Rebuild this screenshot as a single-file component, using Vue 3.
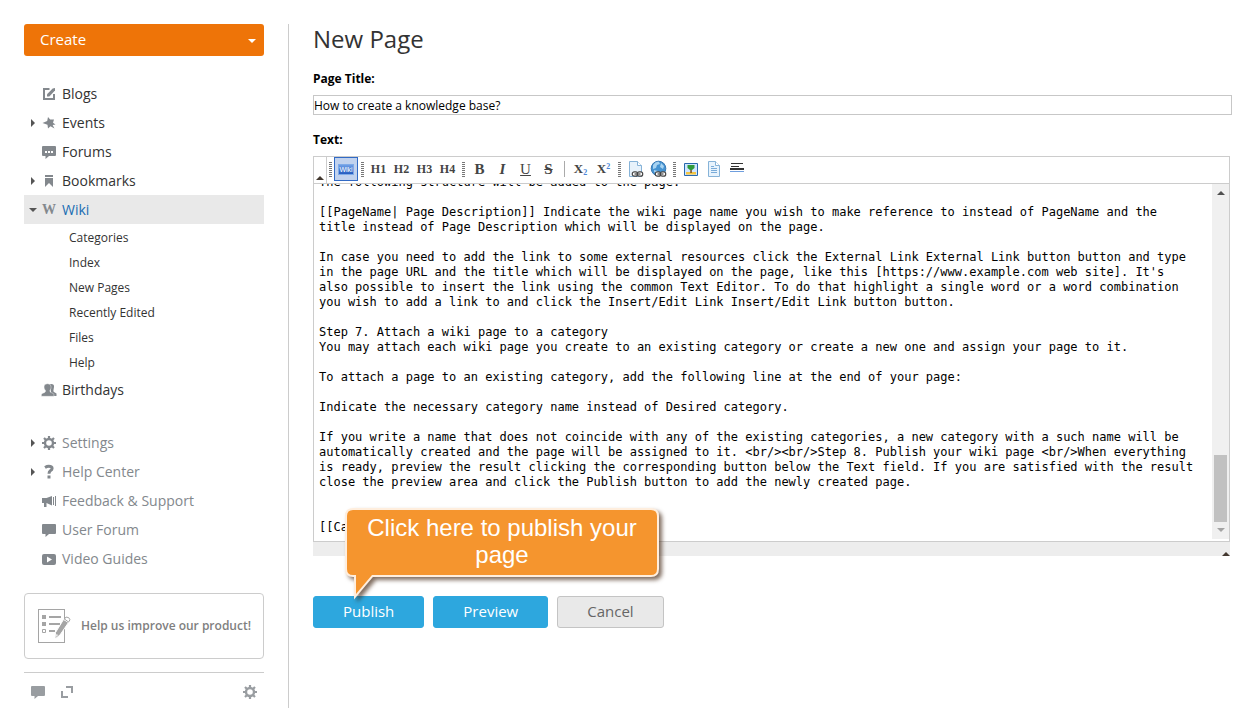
<script setup>
import { ref, onMounted } from 'vue'

const mainNav = [
  { label: 'Blogs', icon: 'edit' },
  { label: 'Events', icon: 'pin', arrow: 'right' },
  { label: 'Forums', icon: 'chat-dots' },
  { label: 'Bookmarks', icon: 'bookmark', arrow: 'right' },
  {
    label: 'Wiki',
    icon: 'wiki',
    arrow: 'down',
    active: true,
    children: ['Categories', 'Index', 'New Pages', 'Recently Edited', 'Files', 'Help'],
  },
  { label: 'Birthdays', icon: 'people' },
]

const supportNav = [
  { label: 'Settings', icon: 'gear', arrow: 'right' },
  { label: 'Help Center', icon: 'question', arrow: 'right' },
  { label: 'Feedback & Support', icon: 'horn' },
  { label: 'User Forum', icon: 'chat' },
  { label: 'Video Guides', icon: 'video' },
]

const navGroups = [
  { name: 'Modules', items: mainNav },
  { name: 'Support', items: supportNav, muted: true },
]

const headings = ['H1', 'H2', 'H3', 'H4']
const pageTitle = ref('How to create a knowledge base?')
const area = ref(null)

const text = ref(`The following structure will be added to the page:

[[PageName| Page Description]] Indicate the wiki page name you wish to make reference to instead of PageName and the
title instead of Page Description which will be displayed on the page.

In case you need to add the link to some external resources click the External Link External Link button button and type
in the page URL and the title which will be displayed on the page, like this [https://www.example.com web site]. It's
also possible to insert the link using the common Text Editor. To do that highlight a single word or a word combination
you wish to add a link to and click the Insert/Edit Link Insert/Edit Link button button.

Step 7. Attach a wiki page to a category
You may attach each wiki page you create to an existing category or create a new one and assign your page to it.

To attach a page to an existing category, add the following line at the end of your page:

Indicate the necessary category name instead of Desired category.

If you write a name that does not coincide with any of the existing categories, a new category with a such name will be
automatically created and the page will be assigned to it. <br/><br/>Step 8. Publish your wiki page <br/>When everything
is ready, preview the result clicking the corresponding button below the Text field. If you are satisfied with the result
close the preview area and click the Publish button to add the newly created page.


[[Ca`)

onMounted(() => {
  area.value.scrollTop = area.value.scrollHeight
})
</script>

<template>
  <div class="page">
    <svg class="defs" aria-hidden="true">
      <symbol id="i-edit" viewBox="0 0 16 16">
        <path d="M8.500 3H3v10h10V8" fill="none" stroke="currentColor" stroke-width="2" />
        <path d="M6 10.500V8.300L11.700 2.500 14 2v2.500L8.300 10.500z" fill="currentColor" />
      </symbol>
      <symbol id="i-pin" viewBox="0 0 16 16">
        <path d="M7 2l2.200 2.600L13 4.500l-1 3.300 2.500 1.700-2.900.6 1.900 3.400-4-2.300L7 13.500l-.5-3.700L1.500 8l4.700-2z" fill="currentColor" />
      </symbol>
      <symbol id="i-chat" viewBox="0 0 16 16">
        <path d="M2 2h12q1 0 1 1v8q0 1-1 1H8L4.500 15v-3H2q-1 0-1-1V3q0-1 1-1z" fill="currentColor" />
      </symbol>
      <symbol id="i-chat-dots" viewBox="0 0 16 16">
        <path d="M2 2h12q1 0 1 1v8q0 1-1 1H8L4.500 15v-3H2q-1 0-1-1V3q0-1 1-1z" fill="currentColor" />
        <path d="M4 7h2v2H4zM7 7h2v2H7zM10 7h2v2h-2z" fill="#fff" />
      </symbol>
      <symbol id="i-bookmark" viewBox="0 0 16 16">
        <path d="M4 2h8v2H4zM4 5h8v9l-4-4-4 4z" fill="currentColor" />
      </symbol>
      <symbol id="i-people" viewBox="0 0 16 16">
        <path d="M9 2q4.500-.6 4 3l-.5 3q-.5 1.500.5 2l2.500 1.500V14h-4l-1.500-3z" fill="currentColor" />
        <path d="M6.500 1.700q3.800 0 3.600 3.300 0 2-1.200 3.500-.2 1.500.8 1.800l2.600 1.200q.7.400.7 2.800H.3q0-2.500.9-2.800l2.500-1q1-.5.800-1.900Q3 7 3 5q0-3.300 3.500-3.300z" fill="currentColor" stroke="#fff" stroke-width=".4" />
      </symbol>
      <symbol id="i-gear" viewBox="0 0 16 16">
        <circle cx="8" cy="8" r="4" fill="none" stroke="currentColor" stroke-width="2.400" />
        <path d="M8 1v3M8 12v3M1 8h3M12 8h3M3 3l2 2M11 11l2 2M13 3l-2 2M5 11l-2 2" stroke="currentColor" stroke-width="2.200" />
      </symbol>
      <symbol id="i-question" viewBox="0 0 16 16">
        <path d="M4 3.500Q6 2.300 7.800 2.300q3.300 0 3.300 2.200 0 1.300-1.700 2.200Q8 7.600 8 9.800" fill="none" stroke="currentColor" stroke-width="3" />
        <path d="M6.500 11.500h3v3h-3z" fill="currentColor" />
      </symbol>
      <symbol id="i-horn" viewBox="0 0 16 16">
        <path d="M1 5h4.500L11 3v9.500L5.500 10v4H3v-4H1z" fill="currentColor" />
        <path d="M12.500 4v8M14.500 3v10" stroke="currentColor" />
      </symbol>
      <symbol id="i-video" viewBox="0 0 16 16">
        <rect x="1" y="3" width="14" height="11" rx="2" fill="currentColor" />
        <path d="M6 5.500l5 3-5 3z" fill="#fff" />
      </symbol>
      <symbol id="i-expand" viewBox="0 0 16 16">
        <path d="M7 3h6v6M3 7v6h6" fill="none" stroke="currentColor" stroke-width="2" />
      </symbol>
      <symbol id="i-chain" viewBox="0 0 12 6">
        <rect x=".8" y=".8" width="5.400" height="4.400" rx="2" fill="#fff" stroke="#444" stroke-width="1.200" />
        <rect x="5.800" y=".8" width="5.400" height="4.400" rx="2" fill="#fff" stroke="#444" stroke-width="1.200" />
        <path d="M3 3h6" stroke="#444" stroke-width="1.200" />
      </symbol>
    </svg>

    <aside class="sidebar">
      <button class="create" type="button">Create <i class="caret"></i></button>

      <nav v-for="g in navGroups" :key="g.name" class="nav" :class="{ muted: g.muted }" :aria-label="g.name">
        <template v-for="n in g.items" :key="n.label">
          <a href="#" class="row" :class="{ active: n.active }">
            <i class="arrow" :class="n.arrow"></i>
            <span v-if="n.icon === 'wiki'" class="mark w" aria-hidden="true">W</span>
            <svg v-else class="icon mark"><use :href="'#i-' + n.icon" /></svg>
            <span>{{ n.label }}</span>
          </a>
          <div v-if="n.children" class="sub">
            <a v-for="c in n.children" :key="c" href="#">{{ c }}</a>
          </div>
        </template>
      </nav>

      <a href="#" class="improve">
        <svg width="34" height="36" viewBox="0 0 34 36" aria-hidden="true">
          <rect x=".5" y="1.500" width="26" height="33" fill="#fff" stroke="#a5a5a5" />
          <path d="M4 7h4v4H4zM4 14h4v4H4z" fill="#a5a5a5" />
          <path d="M4.500 21.500h3v3h-3z" fill="#fff" stroke="#a5a5a5" />
          <path d="M11 9h12M11 16h11M11 23h6" stroke="#a5a5a5" stroke-width="2" />
          <path d="M25.500 11.500l5 3-8.500 12.500-5 4 .5-6.500z" fill="#a5a5a5" stroke="#fff" />
          <path d="M26.500 11l1.500-2q3.500 0 4 2.800l-1.500 2.200z" fill="#fff" stroke="#a5a5a5" />
          <path d="M18.500 26l1.500 1-2 2z" fill="#fff" />
        </svg>
        <span>Help us improve our product!</span>
      </a>

      <div class="tools">
        <button type="button" aria-label="Chat"><svg class="icon"><use href="#i-chat" /></svg></button>
        <button type="button" aria-label="Expand"><svg class="icon"><use href="#i-expand" /></svg></button>
        <button type="button" aria-label="Preferences" class="last"><svg class="icon"><use href="#i-gear" /></svg></button>
      </div>
    </aside>

    <main class="main">
      <h1>New Page</h1>

      <label class="label" for="title">Page Title:</label>
      <input id="title" v-model="pageTitle" class="title-input" type="text" />

      <label class="label text-label" for="body">Text:</label>
      <div class="editor">
        <div class="toolbar" role="toolbar" aria-label="Formatting">
          <button class="collapse" type="button" aria-label="Collapse toolbar"><i></i></button>
          <i class="grip narrow"></i>
          <button class="wiki-btn" type="button" aria-label="Wiki"><span>Wiki</span></button>
          <i class="grip"></i>
          <button v-for="h in headings" :key="h" class="tb head" type="button">{{ h }}</button>
          <i class="grip"></i>
          <button class="tb" type="button"><b>B</b></button>
          <button class="tb" type="button"><b><em>I</em></b></button>
          <button class="tb" type="button"><u>U</u></button>
          <button class="tb" type="button"><b><s>S</s></b></button>
          <i class="sep"></i>
          <button class="tb script" type="button">X<sub>2</sub></button>
          <button class="tb script" type="button">X<sup>2</sup></button>
          <i class="grip"></i>
          <button class="tb" type="button" aria-label="Internal link">
            <svg width="18" height="18" viewBox="0 0 18 18">
              <path d="M2.500 1.500h8l4 4v11h-12z" fill="#e7f2fb" stroke="#86b3d8" />
              <path d="M10.500 1.500v4h4" fill="#fff" stroke="#86b3d8" />
              <use href="#i-chain" x="4" y="11" width="13" height="6" />
            </svg>
          </button>
          <button class="tb" type="button" aria-label="External link">
            <svg width="18" height="18" viewBox="0 0 18 18">
              <circle cx="8.500" cy="8.500" r="7.300" fill="#4593d2" stroke="#3878b4" />
              <path d="M3 5q3-4 6-3l1 2-3 1-1 3-3 1zM11 3l3 3-1 3-3-2zM4 10l4 1-1 3-3-2z" fill="#a8d3f1" />
              <use href="#i-chain" x="4" y="11" width="13" height="6" />
            </svg>
          </button>
          <i class="grip"></i>
          <button class="tb" type="button" aria-label="Image">
            <svg width="16" height="16" viewBox="0 0 16 16">
              <path d="M1.500 2.500h13v12h-13z" fill="#cfe6ff" stroke="#2868ad" />
              <path d="M3 11h10v2.500H3z" fill="#f4c542" />
              <path d="M7.300 8h1.500v4H7.300z" fill="#7a4a1c" />
              <path d="M4.500 4h7v3L9 9H7L4.500 7z" fill="#2f9a3a" />
            </svg>
          </button>
          <button class="tb" type="button" aria-label="File">
            <svg width="16" height="16" viewBox="0 0 16 16">
              <path d="M2.500.5h7l4 4v11h-11z" fill="#e7f3fd" stroke="#86b3d8" />
              <path d="M9.500.5v4h4" fill="#fff" stroke="#86b3d8" />
              <path d="M5 5.500h3M5 7.500h6M5 9.500h6M5 11.500h6" stroke="#79abd8" />
            </svg>
          </button>
          <button class="tb" type="button" aria-label="Table of contents">
            <svg width="16" height="16" viewBox="0 0 16 16">
              <path d="M2 2.500h12M2 5.500h8" stroke="#333" />
              <path d="M1 8h14" stroke="#333" stroke-width="2" />
              <path d="M1 10.500h14" stroke="#6f9ede" />
            </svg>
          </button>
        </div>
        <div class="body">
          <textarea id="body" ref="area" v-model="text" wrap="off" spellcheck="false"></textarea>
          <div class="scroll" aria-hidden="true">
            <i class="up"></i>
            <div class="thumb"></div>
            <i class="dn"></i>
          </div>
        </div>
        <div class="status"><i></i></div>
      </div>

      <div class="actions">
        <button class="btn primary" type="button">Publish</button>
        <button class="btn primary" type="button">Preview</button>
        <button class="btn" type="button">Cancel</button>
        <div class="callout" role="tooltip">
          <svg width="324" height="96" viewBox="0 0 324 96" aria-hidden="true">
            <path
              d="M11 5H309q6 0 6 6V64q0 6-6 6H30L14 89V70H11q-6 0-6-6V11q0-6 6-6z"
              fill="#f5952e"
              stroke="#ffeedd"
              stroke-width="4"
              paint-order="stroke"
            />
          </svg>
          <p>Click here to publish your page</p>
        </div>
      </div>
    </main>
  </div>
</template>

<style>
body {
  background: #fff;
}
</style>

<style scoped>
.page {
  box-sizing: border-box;
  display: flex;
  min-height: 100vh;
  padding: 24px 8px 0 24px;
  font-family: 'Open Sans', 'Noto Sans', sans-serif;
  font-size: 12px;
  color: #333;
}
.defs {
  position: absolute;
  width: 0;
  height: 0;
}
button {
  font: inherit;
  color: inherit;
  margin: 0;
  padding: 0;
  border: 0;
  background: none;
  cursor: pointer;
}
a {
  color: inherit;
  text-decoration: none;
}
.sidebar {
  box-sizing: border-box;
  flex: 0 0 265px;
  padding-right: 24px;
  border-right: 1px solid #ccc;
}
.create {
  display: flex;
  align-items: center;
  justify-content: space-between;
  width: 100%;
  height: 32px;
  padding: 0 8px 2px 16px;
  border-radius: 3px;
  background: #ee7408;
  color: #fff;
  font-size: 15px;
}
.caret {
  margin-top: 4px;
  border: 4px solid transparent;
  border-top-color: #fff;
  border-bottom: 0;
}
.nav {
  margin-top: 23px;
}
.nav.muted {
  margin-top: 24px;
  color: #83888d;
}
.row {
  display: flex;
  align-items: center;
  height: 29px;
  font-size: 14px;
}
.row.active {
  background: #e9e9e9;
  color: #1a6db3;
}
.arrow {
  box-sizing: border-box;
  width: 8px;
  height: 8px;
  margin: 0 4px 0 5px;
}
.arrow.right {
  border: 4px solid transparent;
  border-left-color: #555;
  border-right: 0;
  width: 4px;
  margin: 0 6px 0 7px;
}
.arrow.down {
  border: 4px solid transparent;
  border-top-color: #555;
  border-bottom: 0;
  height: 4px;
}
.icon {
  display: block;
  width: 16px;
  height: 16px;
  color: #83888d;
}
.mark {
  flex: none;
  width: 16px;
  margin-right: 5px;
}
.w {
  color: #83888d;
  font: bold 14px 'Liberation Serif', serif;
  text-align: center;
}
.sub {
  padding: 1px 0 0 45px;
}
.sub a {
  display: block;
  font-size: 12px;
  line-height: 25px;
}
.improve {
  box-sizing: border-box;
  display: flex;
  align-items: center;
  gap: 9px;
  height: 66px;
  margin-top: 20px;
  padding-left: 13px;
  border: 1px solid #ccc;
  border-radius: 4px;
  color: #808080;
  font-weight: 600;
  white-space: nowrap;
}
.improve span {
  padding-bottom: 2px;
}
.tools {
  display: flex;
  gap: 13px;
  margin-top: 13px;
  padding: 11px 6px 0;
  border-top: 1px solid #ccc;
}
.tools .icon {
  color: #999da1;
}
.tools .last {
  margin-left: auto;
}
.main {
  flex: 1;
  min-width: 0;
  padding-left: 24px;
}
h1 {
  margin: 0;
  font-size: 24px;
  font-weight: 400;
  line-height: 30px;
}
.label {
  display: block;
  margin: 16px 0 8px;
  font-weight: 700;
  line-height: 17px;
  color: #000;
}
.title-input {
  box-sizing: border-box;
  display: block;
  width: 100%;
  height: 20px;
  padding: 0;
  border: 1px solid #c7c7c7;
  font: 12px 'Open Sans', sans-serif;
  color: #000;
}
.editor {
  margin-right: 2px;
}
.toolbar {
  display: flex;
  height: 26px;
  border: 1px solid #ccc;
  font-family: 'Liberation Serif', serif;
  color: #444;
}
.collapse {
  display: flex;
  align-items: flex-end;
  justify-content: center;
  width: 13px;
  padding-bottom: 3px;
  border-right: 1px solid #ccc;
}
.collapse i,
.status i {
  border: 4px solid transparent;
  border-bottom-color: #43382f;
  border-top: 0;
}
.grip {
  flex: none;
  width: 9px;
  height: 15px;
  margin-top: 5px;
  background: repeating-linear-gradient(#777 0 1px, #fff 1px 2px) center / 3px 15px no-repeat;
}
.grip.narrow {
  width: 7px;
}
.sep {
  width: 1px;
  height: 16px;
  margin: 4px;
  background: #aaa;
}
.wiki-btn {
  box-sizing: border-box;
  width: 24px;
  height: 24px;
  border: 1px solid #316ac5;
  background: #c1d2ee;
}
.wiki-btn span {
  display: block;
  margin: 0 3px;
  border: 1px solid #7faae8;
  background: linear-gradient(#6f9fe6, #245bc0);
  color: #fff;
  font: 7px/9px 'Liberation Sans', sans-serif;
}
.tb {
  display: flex;
  align-items: center;
  justify-content: center;
  width: 23px;
  height: 24px;
  font-size: 15px;
}
.head {
  font-size: 12px;
  font-weight: 700;
}
.script {
  font-size: 13px;
  font-weight: 700;
}
.script sub,
.script sup {
  color: #4a86d8;
  font-size: 8px;
}
.script sub {
  padding-top: 6px;
}
.script sup {
  padding-bottom: 6px;
}
.body {
  display: flex;
  height: 357px;
  border: 1px solid #ccc;
  border-top: 0;
}
textarea {
  box-sizing: border-box;
  flex: 1;
  min-width: 0;
  height: 100%;
  padding: 2px 5px 6px;
  border: 0;
  outline: 0;
  resize: none;
  overflow: hidden;
  background: #fff;
  color: #000;
  font: 12px/15px 'DejaVu Sans Mono', monospace;
}
.scroll {
  box-sizing: border-box;
  display: flex;
  flex-direction: column;
  align-items: center;
  width: 17px;
  margin-bottom: 2px;
  padding: 7px 0;
  background: #f0f0f0;
}
.up,
.dn {
  border: 4px solid transparent;
}
.up {
  border-bottom-color: #505050;
  border-top: 0;
}
.dn {
  border-top-color: #a3a3a3;
  border-bottom: 0;
}
.thumb {
  width: 13px;
  height: 67px;
  margin: auto 0 6px;
  background: #c1c1c1;
}
.status {
  display: flex;
  align-items: flex-end;
  justify-content: flex-end;
  height: 14px;
  background: #ededed;
}
.actions {
  position: relative;
  display: flex;
  gap: 9px;
  margin-top: 40px;
}
.btn {
  box-sizing: border-box;
  height: 32px;
  padding: 0 29px 2px;
  border: 1px solid #c4c4c4;
  border-radius: 3px;
  background: #e9e9e9;
  color: #666;
  font-size: 15px;
}
.btn.primary {
  border-color: #2da7de;
  background: #2da7de;
  color: #fff;
}
.callout {
  position: absolute;
  left: 29px;
  bottom: 27px;
  width: 324px;
  height: 96px;
  display: flex;
  justify-content: center;
}
.callout svg {
  position: absolute;
  inset: 0;
  filter: drop-shadow(3px 3px 2px rgba(60, 30, 10, 0.65));
}
.callout p {
  position: relative;
  width: 290px;
  margin: 9px 4px 0 0;
  color: #fff;
  font: 24px/27px 'Liberation Sans', Arial, sans-serif;
  text-align: center;
}
</style>
